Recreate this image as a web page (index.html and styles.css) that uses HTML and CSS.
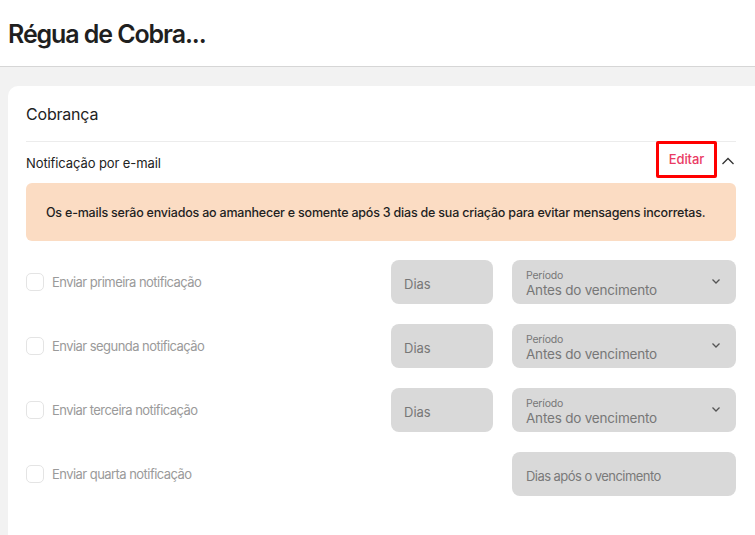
FILE: index.html
```html
<!DOCTYPE html>
<html lang="pt-BR">
<head>
<meta charset="utf-8">
<link rel="stylesheet" href="styles.css">
</head>
<body>
<header class="topbar">
  <h1 class="title">Régua de Cobra...</h1>
</header>
<main class="page">
  <section class="card">
    <h2 class="card-title">Cobrança</h2>
    <div class="section-head">
      <span class="section-label">Notificação por e-mail</span>
      <div class="head-actions">
        <button class="edit-btn">Editar</button>
        <svg class="chev-up" width="14" height="14" viewBox="0 0 14 14"><path d="M1.5 10 L7 4.5 L12.5 10" fill="none" stroke="#333" stroke-width="1.3"/></svg>
      </div>
    </div>
    <div class="alert">Os e-mails serão enviados ao amanhecer e somente após 3 dias de sua criação para evitar mensagens incorretas.</div>
    <div class="rows">
      <div class="row">
        <label class="check"><span class="box"></span><span class="check-label">Enviar primeira notificação</span></label>
        <div class="days">Dias</div>
        <div class="select">
          <div class="select-text"><span class="select-cap">Período</span><span class="select-val">Antes do vencimento</span></div>
          <svg class="chev" width="12" height="12" viewBox="0 0 12 12"><path d="M2.5 4.5 L6 8 L9.5 4.5" fill="none" stroke="#555" stroke-width="1.3"/></svg>
        </div>
      </div>
      <div class="row">
        <label class="check"><span class="box"></span><span class="check-label">Enviar segunda notificação</span></label>
        <div class="days">Dias</div>
        <div class="select">
          <div class="select-text"><span class="select-cap">Período</span><span class="select-val">Antes do vencimento</span></div>
          <svg class="chev" width="12" height="12" viewBox="0 0 12 12"><path d="M2.5 4.5 L6 8 L9.5 4.5" fill="none" stroke="#555" stroke-width="1.3"/></svg>
        </div>
      </div>
      <div class="row">
        <label class="check"><span class="box"></span><span class="check-label">Enviar terceira notificação</span></label>
        <div class="days">Dias</div>
        <div class="select">
          <div class="select-text"><span class="select-cap">Período</span><span class="select-val">Antes do vencimento</span></div>
          <svg class="chev" width="12" height="12" viewBox="0 0 12 12"><path d="M2.5 4.5 L6 8 L9.5 4.5" fill="none" stroke="#555" stroke-width="1.3"/></svg>
        </div>
      </div>
      <div class="row">
        <label class="check"><span class="box"></span><span class="check-label">Enviar quarta notificação</span></label>
        <div class="days empty"></div>
        <div class="select plain"><span class="plain-val">Dias após o vencimento</span></div>
      </div>
    </div>
  </section>
</main>
</body>
</html>
```
FILE: styles.css
```css
* { box-sizing: border-box; }
html, body { margin: 0; padding: 0; }
body {
  font-family: Inter, "Noto Sans", sans-serif;
  background: #f2f2f2;
  color: #222;
  width: 755px;
  height: 535px;
  overflow: hidden;
}
.topbar {
  background: #fff;
  height: 67px;
  border-bottom: 1px solid #d6d6d6;
  padding: 0 8px;
  display: flex;
  align-items: center;
}
.title {
  margin: 0;
  font-size: 25px;
  font-weight: 600;
  letter-spacing: -1.1px;
  color: #1f1f1f;
  padding-top: 2px;
}
.page {
  padding: 19px 0 0 8px;
}
.card {
  background: #fff;
  border-radius: 10px 0 0 0;
  padding: 18px 19px 40px 18px;
  min-height: 460px;
}
.card-title {
  margin: 0;
  font-size: 16px;
  font-weight: 400;
  color: #222;
  height: 38px;
  border-bottom: 1px solid #ececec;
  letter-spacing: -0.2px;
}
.section-head {
  height: 41px;
  display: flex;
  align-items: center;
  justify-content: space-between;
}
.section-label {
  font-size: 13px;
  color: #222;
  letter-spacing: -0.1px;
}
.head-actions {
  display: flex;
  align-items: center;
  gap: 4px;
  margin-top: -7px;
}
.edit-btn {
  font-family: inherit;
  background: #fff;
  border: 3px solid #ff0000;
  border-radius: 2px;
  color: #ea3a63;
  font-size: 13px;
  font-weight: 500;
  width: 61px;
  height: 37px;
  padding: 0;
  letter-spacing: -0.1px;
}
.chev-up { margin-right: 1px; margin-top: 3px; }
.alert {
  background: #fbdcc3;
  border-radius: 6px;
  height: 58px;
  display: flex;
  align-items: center;
  padding-left: 20px;
  font-size: 12.5px;
  font-weight: 500;
  color: #1f1f1f;
  letter-spacing: -0.21px;
}
.rows {
  margin-top: 19px;
  display: flex;
  flex-direction: column;
  gap: 20px;
}
.row {
  display: flex;
  align-items: center;
  height: 44px;
}
.check {
  display: flex;
  align-items: center;
  gap: 8px;
  width: 365px;
}
.box {
  width: 18px;
  height: 18px;
  border: 1px solid #e4e4e4;
  border-radius: 5px;
  background: #fff;
}
.check-label {
  font-size: 13px;
  color: #9a9a9a;
  letter-spacing: -0.55px;
}
.days {
  width: 102px;
  height: 44px;
  background: #d9d9d9;
  border-radius: 8px;
  display: flex;
  align-items: center;
  padding: 3px 0 0 13px;
  font-size: 13px;
  color: #777;
}
.days.empty { background: transparent; }
.select {
  margin-left: 19px;
  width: 224px;
  height: 44px;
  background: #d9d9d9;
  border-radius: 8px;
  display: flex;
  align-items: center;
  justify-content: space-between;
  padding: 0 14px 0 14px;
}
.select-text {
  display: flex;
  flex-direction: column;
  line-height: 1.2;
  padding-top: 4px;
}
.select-cap {
  font-size: 10.5px;
  color: #777;
  letter-spacing: -0.2px;
}
.select-val {
  font-size: 13.5px;
  color: #777;
  letter-spacing: -0.2px;
}
.chev { margin-top: -2px; }
.plain {
  padding-top: 3px;
}
.plain-val {
  font-size: 13px;
  color: #7a7a7a;
  letter-spacing: -0.55px;
}
```
